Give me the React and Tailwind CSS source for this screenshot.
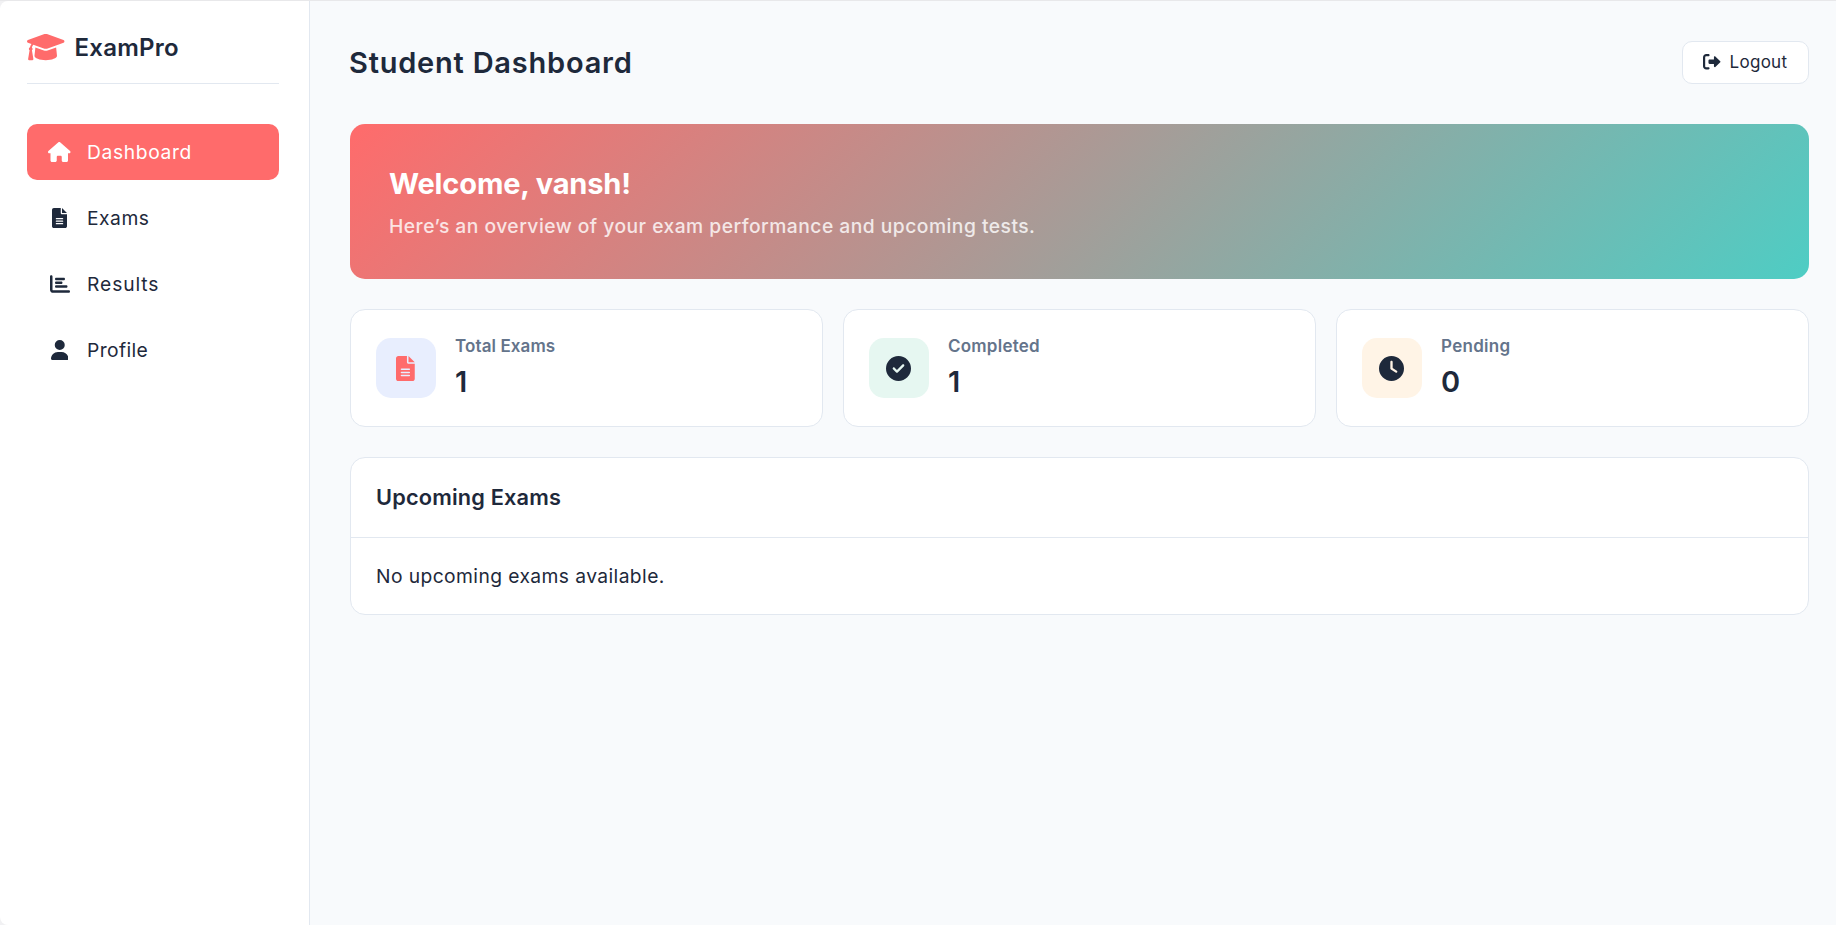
import React from "react";
import { FaHouse, FaChartBar, FaUser, FaCircleCheck, FaClock } from "react-icons/fa6";

function GraduationCap({ className }) {
  return (
    <svg viewBox="0 0 640 512" fill="currentColor" className={className}>
      <path d="M623.1 136.9l-282.7-101.2c-13.73-4.91-28.7-4.91-42.43 0L16.05 136.9C6.438 140.4 0 149.6 0 160s6.438 19.65 16.05 23.09L76.07 204.6c-11.89 15.8-20.26 34.16-24.55 53.95C40.05 263.4 32 274.8 32 288c0 9.953 4.814 18.49 11.94 24.36l-24.83 149C17.48 471.1 25 480 34.89 480H93.11c9.887 0 17.41-8.879 15.78-18.63l-24.83-149C91.19 306.5 96 297.1 96 288c0-10.29-5.174-19.03-12.72-24.89c4.252-17.76 12.88-33.82 24.94-47.03l190.6 68.23c13.73 4.91 28.7 4.91 42.43 0l282.7-101.2C632.7 179.6 639.1 170.4 639.1 160S632.7 140.4 623.1 136.9zM351.1 314.4C341.7 318.5 330.9 320 320 320c-10.92 0-21.69-1.867-32-5.555L142.8 262.5L128 405.3C128 446.6 213.1 480 320 480c105.1 0 192-33.4 192-74.67l-14.78-142.9L351.1 314.4z" />
    </svg>
  );
}

function FileLines({ className }) {
  return (
    <svg viewBox="0 0 384 512" fill="currentColor" className={className}>
      <path d="M256 0v128h128L256 0zM224 128L224 0H48C21.49 0 0 21.49 0 48v416C0 490.5 21.49 512 48 512h288c26.51 0 48-21.49 48-48V160h-127.1C238.3 160 224 145.7 224 128zM272 416h-160C103.2 416 96 408.8 96 400C96 391.2 103.2 384 112 384h160c8.836 0 16 7.162 16 16C288 408.8 280.8 416 272 416zM272 352h-160C103.2 352 96 344.8 96 336C96 327.2 103.2 320 112 320h160c8.836 0 16 7.162 16 16C288 344.8 280.8 352 272 352zM288 272C288 280.8 280.8 288 272 288h-160C103.2 288 96 280.8 96 272C96 263.2 103.2 256 112 256h160C280.8 256 288 263.2 288 272z" />
    </svg>
  );
}

function SignOut({ className }) {
  return (
    <svg viewBox="0 0 512 512" fill="currentColor" className={className}>
      <path d="M96 480h64C177.7 480 192 465.7 192 448S177.7 416 160 416H96c-17.67 0-32-14.33-32-32V128c0-17.67 14.33-32 32-32h64C177.7 96 192 81.67 192 64S177.7 32 160 32H96C42.98 32 0 74.98 0 128v256C0 437 42.98 480 96 480zM504.8 238.5l-144.1-136c-6.975-6.578-17.2-8.375-26-4.594c-8.803 3.797-14.51 12.47-14.51 22.05l-.0918 72l-128-.001c-17.69 0-32.02 14.33-32.02 32v64c0 17.67 14.34 32 32.02 32l128 .001l.0918 71.1c0 9.578 5.707 18.25 14.51 22.05c8.803 3.781 19.03 1.984 26-4.594l144.1-136C514.4 264.4 514.4 247.6 504.8 238.5z" />
    </svg>
  );
}

const navItems = [
  { label: "Dashboard", Icon: FaHouse, icon: "w-[22.5px]", text: "tracking-[0.62px]", active: true },
  { label: "Exams", Icon: FileLines, icon: "w-[15px]", text: "tracking-[0.5px]" },
  { label: "Results", Icon: FaChartBar, icon: "w-5", text: "tracking-[0.9px]" },
  { label: "Profile", Icon: FaUser, icon: "w-[17.5px]", text: "tracking-[0.4px]" },
];

const stats = [
  { label: "Total Exams", value: "1", Icon: FileLines, box: "bg-[#e8eefe] text-[#ff6b6b]", icon: "w-[18.75px]", text: "tracking-[0.1px]" },
  { label: "Completed", value: "1", Icon: FaCircleCheck, box: "bg-[#e6f7f1]", icon: "w-[25px]", text: "tracking-[0.23px]" },
  { label: "Pending", value: "0", Icon: FaClock, box: "bg-[#fff4e6]", icon: "w-[25px]", text: "tracking-[0.29px]" },
];

function Sidebar() {
  return (
    <aside className="w-[310px] shrink-0 rounded-l-lg border-r border-[#e2e8f0] bg-white pr-[30px] pl-[27px]">
      <div className="flex h-[83px] items-center gap-2.5 border-b border-[#e2e8f0] pt-[9px]">
        <GraduationCap className="h-[30px] w-[37.5px] text-[#ff6b6b]" />
        <span className="pt-0.5 text-[24px] leading-none font-semibold tracking-[0.25px]">ExamPro</span>
      </div>
      <nav className="mt-10 flex flex-col gap-2.5">
        {navItems.map(({ label, Icon, icon, text, active }) => (
          <a
            key={label}
            className={`flex h-14 items-center gap-[15px] rounded-[10px] px-5 ${active ? "bg-[#ff6b6b] text-white" : ""}`}
          >
            <span className="flex w-[25px] justify-center pb-px">
              <Icon className={`h-5 shrink-0 ${icon}`} />
            </span>
            <span className={`pt-0.5 text-[19.25px] leading-none ${text}`}>{label}</span>
          </a>
        ))}
      </nav>
    </aside>
  );
}

function StatCard({ label, value, Icon, box, icon, text }) {
  return (
    <div className="flex h-[118px] items-center gap-[19px] rounded-[15px] border border-[#e2e8f0] bg-white px-[25px]">
      <div className={`flex size-[60px] items-center justify-center rounded-[15px] pr-px ${box}`}>
        <Icon className={`h-[25px] ${icon}`} />
      </div>
      <div>
        <h3 className={`text-[17px] leading-[22px] font-semibold text-[#64748b] ${text}`}>{label}</h3>
        <p className="mt-[5px] text-[29px] leading-[39px] font-semibold">{value}</p>
      </div>
    </div>
  );
}

export default function App() {
  return (
    <div className="flex h-screen border-t border-[#e8e8ea] bg-[#f1f1f3] font-['Inter',sans-serif] text-[#1e293b]">
      <Sidebar />
      <main className="flex-1 bg-[#f8fafc] pt-10 pr-[27px] pl-10">
        <header className="mb-10 flex h-[43px] items-center justify-between">
          <h1 className="-ml-px text-[29px] leading-none font-semibold tracking-[0.78px]">Student Dashboard</h1>
          <button className="flex h-[43px] w-[127px] items-center gap-[9px] rounded-[10px] border border-[#e2e8f0] bg-white pl-5">
            <SignOut className="mb-px size-[17.5px]" />
            <span className="text-[17px] leading-none tracking-[0.3px]">Logout</span>
          </button>
        </header>

        <section className="h-[155px] rounded-[15px] bg-[linear-gradient(135deg,#ff6b6b,#4ecdc4)] p-10 text-white">
          <h2 className="-ml-px text-[29px] leading-[39px] font-bold tracking-[-0.15px]">Welcome, vansh!</h2>
          <p className="mt-2.5 -ml-px text-[19.25px] leading-[26px] font-medium tracking-[0.48px] opacity-80">
            Here’s an overview of your exam performance and upcoming tests.
          </p>
        </section>

        <section className="mt-[30px] grid grid-cols-3 gap-5">
          {stats.map((stat) => (
            <StatCard key={stat.label} {...stat} />
          ))}
        </section>

        <section className="mt-[30px] rounded-[15px] border border-[#e2e8f0] bg-white">
          <div className="flex h-20 items-center border-b border-[#e2e8f0] px-[25px]">
            <h2 className="text-[21.75px] leading-none font-semibold tracking-[0.17px]">Upcoming Exams</h2>
          </div>
          <div className="flex h-[76px] items-center px-[25px]">
            <p className="pt-0.5 text-[19.25px] leading-none tracking-[0.41px]">No upcoming exams available.</p>
          </div>
        </section>
      </main>
    </div>
  );
}
